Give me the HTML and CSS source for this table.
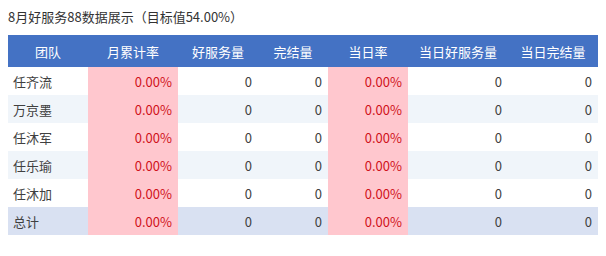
FILE: index.html
```html
<!DOCTYPE html>
<html lang="zh-CN">
<head>
<meta charset="utf-8">
<link rel="stylesheet" href="styles.css">
</head>
<body>
<div class="title">8月好服务88数据展示（目标值54.00%）</div>
<table class="grid">
  <colgroup>
    <col class="c1"><col class="c2"><col class="c3"><col class="c4"><col class="c5"><col class="c6"><col class="c7">
  </colgroup>
  <thead>
    <tr><th>团队</th><th>月累计率</th><th>好服务量</th><th>完结量</th><th>当日率</th><th>当日好服务量</th><th>当日完结量</th></tr>
  </thead>
  <tbody>
    <tr><td class="name">任齐流</td><td class="bad">0.00%</td><td>0</td><td>0</td><td class="bad">0.00%</td><td>0</td><td>0</td></tr>
    <tr class="alt"><td class="name">万京墨</td><td class="bad">0.00%</td><td>0</td><td>0</td><td class="bad">0.00%</td><td>0</td><td>0</td></tr>
    <tr><td class="name">任沐军</td><td class="bad">0.00%</td><td>0</td><td>0</td><td class="bad">0.00%</td><td>0</td><td>0</td></tr>
    <tr class="alt"><td class="name">任乐瑜</td><td class="bad">0.00%</td><td>0</td><td>0</td><td class="bad">0.00%</td><td>0</td><td>0</td></tr>
    <tr><td class="name">任沐加</td><td class="bad">0.00%</td><td>0</td><td>0</td><td class="bad">0.00%</td><td>0</td><td>0</td></tr>
    <tr class="total"><td class="name">总计</td><td class="bad">0.00%</td><td>0</td><td>0</td><td class="bad">0.00%</td><td>0</td><td>0</td></tr>
  </tbody>
</table>
</body>
</html>
```
FILE: styles.css
```css
html, body {
  margin: 0;
  padding: 0;
  background: #ffffff;
}
body {
  padding: 8px;
  font-family: "Noto Sans CJK SC", "Noto Sans", sans-serif;
  font-size: 13px;
  color: #333333;
}
.title {
  height: 17px;
  line-height: 17px;
  margin-bottom: 10px;
  color: #333333;
}
.grid {
  border-collapse: collapse;
  table-layout: fixed;
  width: 590px;
}
.c1 { width: 80px; }
.c2 { width: 90px; }
.c3 { width: 80px; }
.c4 { width: 70px; }
.c5 { width: 80px; }
.c6 { width: 100px; }
.c7 { width: 90px; }
.grid th {
  height: 32px;
  padding: 0;
  background: #4472c4;
  color: #ffffff;
  font-weight: normal;
  text-align: center;
}
.grid td {
  height: 28px;
  padding: 0 6px 0 5px;
  text-align: right;
  color: #404040;
}
.grid td.name {
  text-align: left;
}
.grid tr.alt td {
  background: #f0f5fa;
}
.grid tr.total td {
  background: #d9e1f2;
}
.grid td.bad,
.grid tr.alt td.bad,
.grid tr.total td.bad {
  background: #ffc7ce;
  color: #d0121b;
}
```
